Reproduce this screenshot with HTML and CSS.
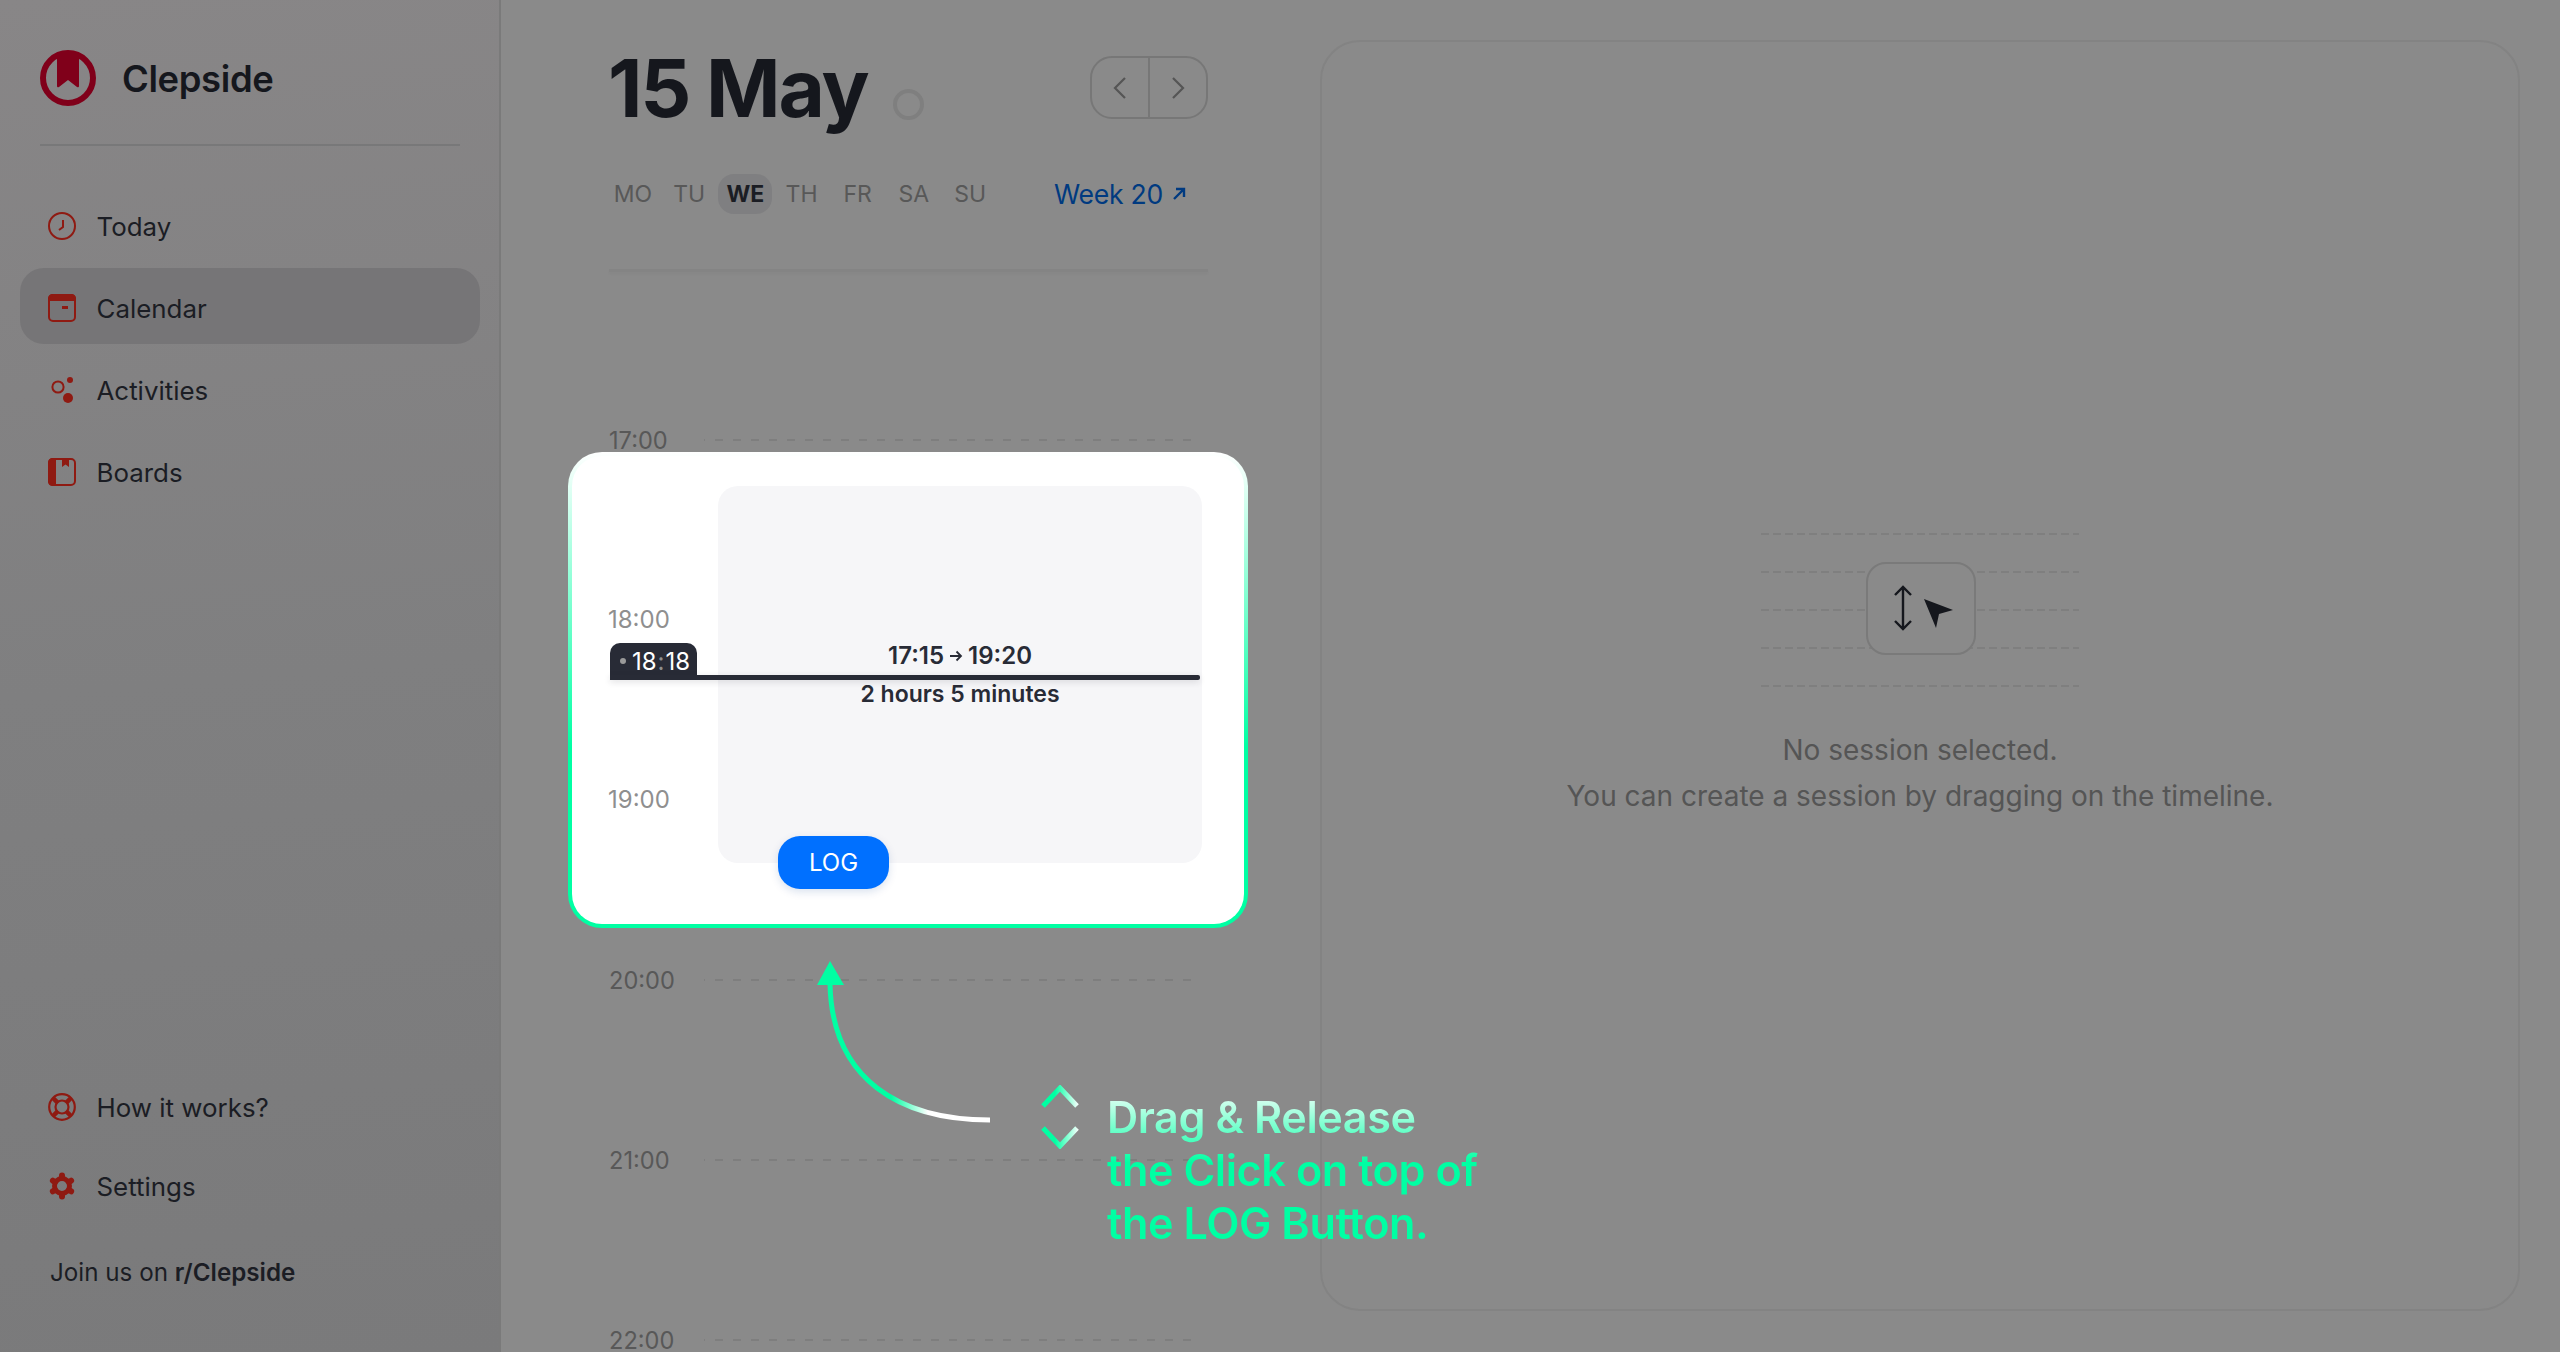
FILE: index.html
```html
<!DOCTYPE html>
<html lang="en">
<head>
    <meta charset="UTF-8">
    <meta name="viewport" content="width=device-width, initial-scale=1.0">
    <title>Clepside</title>
    <link rel="stylesheet" href="styles.css">
</head>
<body>
    <div class="app">
        <aside class="sidebar">
            <div class="brand">
                <svg class="logo" viewBox="0 0 56 56">
                    <circle cx="28" cy="28" r="25" fill="none" stroke="#80001a" stroke-width="6"/>
                    <path d="M17 3 H39 V36 Q39 38 37 37 L28 30 L19 37 Q17 38 17 36 Z" fill="#80001a"/>
                </svg>
                <span class="brand-name">Clepside</span>
            </div>

            <nav class="nav">
                <a class="nav-item">
                    <svg class="nav-icon" viewBox="0 0 28 28" fill="none" stroke="#8f1a12" stroke-width="2">
                        <circle cx="14" cy="14" r="13"/>
                        <path d="M15 8 V15 L11 18"/>
                    </svg>
                    Today
                </a>
                <a class="nav-item active">
                    <svg class="nav-icon" viewBox="0 0 28 28" fill="none" stroke="#8f1a12" stroke-width="2">
                        <rect x="1" y="1" width="26" height="26" rx="4"/>
                        <path d="M1 6 V5 Q1 1 5 1 H23 Q27 1 27 5 V6 Z" fill="#8f1a12"/>
                        <rect x="14" y="12" width="6" height="3" fill="#8f1a12" stroke="none"/>
                    </svg>
                    Calendar
                </a>
                <a class="nav-item">
                    <svg class="nav-icon" viewBox="0 0 28 28" fill="#8f1a12">
                        <circle cx="10" cy="11" r="5.6" fill="none" stroke="#8f1a12" stroke-width="2"/>
                        <circle cx="22" cy="4" r="3"/>
                        <circle cx="20" cy="22" r="5"/>
                    </svg>
                    Activities
                </a>
                <a class="nav-item">
                    <svg class="nav-icon" viewBox="0 0 28 28" fill="none" stroke="#8f1a12" stroke-width="2">
                        <rect x="1" y="1" width="26" height="26" rx="4"/>
                        <path d="M1 5 Q1 1 5 1 H7 V27 H5 Q1 27 1 23 Z" fill="#8f1a12"/>
                        <path d="M14 1 H21 V9 L17.5 6.5 L14 9 Z" fill="#8f1a12" stroke="none"/>
                    </svg>
                    Boards
                </a>
            </nav>

            <div class="sidebar-bottom">
                <a class="nav-item">
                    <svg class="nav-icon" viewBox="0 0 28 28" fill="none" stroke="#8f1a12" stroke-width="2.2">
                        <circle cx="14" cy="14" r="12.8"/>
                        <circle cx="14" cy="14" r="6.5"/>
                        <path d="M5 5 L9.4 9.4 M23 5 L18.6 9.4 M5 23 L9.4 18.6 M23 23 L18.6 18.6" stroke-width="4.5"/>
                    </svg>
                    How it works?
                </a>
                <a class="nav-item">
                    <svg class="nav-icon" viewBox="0 0 28 28" fill="none" stroke="#8f1a12">
                        <circle cx="14" cy="14" r="7.5" stroke-width="5"/>
                        <g stroke-width="6" stroke-linecap="round">
                            <path d="M14 3.5 V6"/>
                            <path d="M14 22 V24.5"/>
                            <path d="M4.9 8.7 L7 10"/>
                            <path d="M21 18 L23.1 19.3"/>
                            <path d="M4.9 19.3 L7 18"/>
                            <path d="M21 10 L23.1 8.7"/>
                        </g>
                    </svg>
                    Settings
                </a>
                <p class="join">Join us on <b>r/Clepside</b></p>
            </div>
        </aside>

        <main class="main">
            <section class="calendar">
                <div class="date-row">
                    <h1 class="date">15 May</h1>
                    <span class="status-ring"></span>
                    <div class="pager">
                        <button class="pager-btn">
                            <svg viewBox="0 0 14 24" width="14" height="24" fill="none" stroke="#555" stroke-width="2.2"><path d="M12 2 L2 12 L12 22"/></svg>
                        </button>
                        <button class="pager-btn">
                            <svg viewBox="0 0 14 24" width="14" height="24" fill="none" stroke="#555" stroke-width="2.2"><path d="M2 2 L12 12 L2 22"/></svg>
                        </button>
                    </div>
                </div>

                <div class="week-row">
                    <div class="days">
                        <span class="day">MO</span>
                        <span class="day">TU</span>
                        <span class="day today">WE</span>
                        <span class="day">TH</span>
                        <span class="day">FR</span>
                        <span class="day">SA</span>
                        <span class="day">SU</span>
                    </div>
                    <a class="week-link">Week 20
                        <svg viewBox="0 0 14 14" width="14" height="14" fill="none" stroke="#003a80" stroke-width="2.4"><path d="M2 12 L12 2 M4 2 H12 V10"/></svg>
                    </a>
                </div>
                <div class="header-rule"></div>

                <div class="timeline">
                    <div class="hour"><span class="hour-label">17:00</span><span class="hour-line"></span></div>
                    <div class="hour"><span class="hour-label">18:00</span><span class="hour-line"></span></div>
                    <div class="hour"><span class="hour-label">19:00</span><span class="hour-line"></span></div>
                    <div class="hour"><span class="hour-label">20:00</span><span class="hour-line"></span></div>
                    <div class="hour"><span class="hour-label">21:00</span><span class="hour-line"></span></div>
                    <div class="hour"><span class="hour-label">22:00</span><span class="hour-line"></span></div>
                </div>
            </section>

            <section class="detail">
                <div class="empty-art">
                    <span class="art-line"></span>
                    <span class="art-line"></span>
                    <span class="art-line"></span>
                    <span class="art-line"></span>
                    <span class="art-line"></span>
                    <div class="empty-icon">
                        <svg viewBox="0 0 70 50" width="70" height="50" fill="none">
                            <path d="M14 3 V45 M6 11 L14 3 L22 11 M6 37 L14 45 L22 37" stroke="#15171d" stroke-width="2.4"/>
                            <path d="M35 15 L64 26 L50 30 L47 44 Z" fill="#15171d"/>
                        </svg>
                    </div>
                </div>
                <p class="empty-text">No session selected.<br>You can create a session by dragging on the timeline.</p>
            </section>
        </main>

        <div class="spotlight">
            <span class="spot-hour spot-18">18:00</span>
            <span class="spot-hour spot-19">19:00</span>
            <div class="session">
                <span class="session-time">17:15 <svg viewBox="0 0 14 14" width="14" height="14" fill="none" stroke="#282b36" stroke-width="1.8"><path d="M1 7 H12 M7.5 2.5 L12 7 L7.5 11.5"/></svg> 19:20</span>
                <span class="session-length">2 hours 5 minutes</span>
            </div>
            <div class="now-tag"><i class="now-dot"></i>18<em>:</em>18</div>
            <div class="now-line"></div>
            <button class="log-btn">LOG</button>
        </div>

        <div class="callout">
            <svg class="callout-arrow" viewBox="0 0 176 164" width="176" height="164" fill="none">
                <defs>
                    <linearGradient id="arrowFade" gradientUnits="userSpaceOnUse" x1="75" y1="0" x2="112" y2="0">
                        <stop offset="0" stop-color="#00ffa3"/>
                        <stop offset="1" stop-color="#fff"/>
                    </linearGradient>
                </defs>
                <path d="M174 160 C84 160 16 120 14 24" stroke="url(#arrowFade)" stroke-width="5"/>
                <path d="M14 1 L28 25 H1 Z" fill="#00ffa3"/>
            </svg>
            <svg class="callout-chevrons" viewBox="0 0 38 64" width="38" height="64" fill="none">
                <defs>
                    <linearGradient id="chevFade" gradientUnits="userSpaceOnUse" x1="14" y1="0" x2="38" y2="0">
                        <stop offset="0" stop-color="#00ffa3"/>
                        <stop offset="1" stop-color="#fff"/>
                    </linearGradient>
                </defs>
                <path d="M2 21 L19 3 L36 21 M2 43 L19 61 L36 43" stroke="url(#chevFade)" stroke-width="5"/>
            </svg>
            <p class="callout-text">Drag &amp; Release<br>the Click on top of<br>the LOG Button.</p>
        </div>
    </div>
</body>
</html>
```

FILE: styles.css
```css
* {
    box-sizing: border-box;
}
body {
    margin: 0;
    font-family: Inter, "Noto Sans", sans-serif;
    background-color: #8a8a8a;
    color: #1b1d24;
    overflow: hidden;
}
.app {
    position: relative;
    display: flex;
    width: 2560px;
    height: 1352px;
    overflow: hidden;
}

/* sidebar */
.sidebar {
    display: flex;
    flex-direction: column;
    flex: 0 0 501px;
    padding: 50px 19px 0 20px;
    background: linear-gradient(175deg, #888687 0%, #7f7f80 50%, #7a7a7b 100%);
    border-right: 2px solid #7a7a7a;
}
.brand {
    display: flex;
    align-items: center;
    gap: 26px;
    height: 96px;
    margin: 0 20px;
    padding-bottom: 39px;
    border-bottom: 2px solid #787879;
}
.logo {
    width: 56px;
    height: 56px;
}
.brand-name {
    margin-top: 2px;
    font-size: 36.4px;
    font-weight: 600;
    color: #15171d;
    letter-spacing: -0.01em;
}
.nav {
    display: flex;
    flex-direction: column;
    gap: 6px;
    margin-top: 40px;
}
.nav-item {
    display: flex;
    align-items: center;
    gap: 20.5px;
    height: 76px;
    padding: 4px 0 0 28px;
    border-radius: 24px;
    font-size: 25.9px;
}
.nav-item.active {
    background-color: #767577;
}
.nav-icon {
    width: 28px;
    height: 28px;
    flex: none;
}
.sidebar-bottom {
    display: flex;
    flex-direction: column;
    gap: 3px;
    margin-top: auto;
    padding-bottom: 64px;
}
.join {
    margin: 33px 0 0 30px;
    font-size: 24.2px;
    line-height: 30px;
}
.join b {
    font-weight: 600;
}

/* calendar column */
.main {
    display: flex;
    flex: 1;
    gap: 112px;
    padding: 40px 40px 41px 108px;
}
.calendar {
    flex: 0 0 599px;
}
.date-row {
    display: flex;
    align-items: flex-start;
    height: 100px;
    padding-top: 16px;
}
.date {
    margin: -8px 0 0 -1px;
    font-size: 80px;
    font-weight: 700;
    line-height: 1;
    letter-spacing: -0.027em;
    color: #15171d;
}
.status-ring {
    width: 31px;
    height: 31px;
    margin: 33px 0 0 26px;
    border: 4px solid #7f7f7f;
    border-radius: 50%;
}
.pager {
    display: flex;
    margin-left: auto;
    width: 118px;
    height: 63px;
    border: 2px solid #777;
    border-radius: 22px;
}
.pager-btn {
    display: flex;
    flex: 1;
    align-items: center;
    justify-content: center;
    padding: 0;
    background: none;
    border: 0;
}
.pager-btn + .pager-btn {
    border-left: 2px solid #777;
}
.week-row {
    display: flex;
    align-items: center;
    justify-content: space-between;
    height: 40px;
    margin-top: 34px;
    padding-right: 22px;
}
.days {
    display: flex;
    gap: 2.2px;
    margin-left: -3px;
}
.day {
    width: 54px;
    height: 40px;
    font-size: 23px;
    line-height: 40px;
    text-align: center;
    color: #585858;
}
.day.today {
    background-color: #7f7f81;
    border-radius: 16px;
    font-weight: 700;
    color: #1b1d24;
}
.week-link {
    display: flex;
    align-items: center;
    gap: 9px;
    font-size: 26.6px;
    color: #003a80;
    letter-spacing: -0.01em;
}
.header-rule {
    height: 3px;
    margin-top: 55px;
    background-color: #848484;
    box-shadow: 0 2px 3px rgba(0, 0, 0, 0.03);
}
.timeline {
    margin-top: 78px;
}
.hour {
    display: flex;
    align-items: center;
    height: 180px;
}
.hour-label {
    flex: 0 0 95px;
    font-size: 23.6px;
    color: #585858;
}
.hour-line {
    flex: 1;
    height: 2px;
    margin-right: 17px;
    background: repeating-linear-gradient(90deg, #7e7e7e 0 1px, transparent 1px 11px, #7e7e7e 11px 18px);
}

/* empty session panel */
.detail {
    flex: 1;
    display: flex;
    flex-direction: column;
    align-items: center;
    border: 2px solid #838383;
    border-radius: 40px;
}
.empty-art {
    position: relative;
    display: flex;
    flex-direction: column;
    gap: 36px;
    width: 318px;
    margin-top: 491px;
}
.art-line {
    height: 2px;
    background: repeating-linear-gradient(90deg, #7f7f7f 0 8px, transparent 8px 12px);
}
.empty-icon {
    position: absolute;
    left: 105px;
    top: 29px;
    display: flex;
    align-items: center;
    justify-content: center;
    width: 110px;
    height: 93px;
    padding-left: 6px;
    background-color: #8a8a8a;
    border: 2px solid #7a7a7a;
    border-radius: 20px;
}
.empty-text {
    margin: 40px 0 0;
    font-size: 28px;
    line-height: 46px;
    text-align: center;
    color: #555;
}

/* highlighted part of the timeline */
.spotlight {
    position: absolute;
    left: 568px;
    top: 452px;
    width: 680px;
    height: 476px;
    border: 4px solid transparent;
    border-radius: 34px;
    background:
        linear-gradient(#fff, #fff) padding-box,
        linear-gradient(180deg, #fff 0%, #00ffa3 62%) border-box;
}
.spot-hour {
    position: absolute;
    left: 36px;
    font-size: 24px;
    line-height: 30px;
    color: #8f8f8f;
}
.spot-18 {
    top: 149px;
}
.spot-19 {
    top: 329px;
}
.session {
    position: absolute;
    left: 146px;
    top: 30px;
    display: flex;
    flex-direction: column;
    align-items: center;
    width: 484px;
    height: 377px;
    padding-top: 151px;
    background-color: #f6f6f8;
    border-radius: 20px;
    font-size: 24px;
    font-weight: 600;
    line-height: 38px;
    color: #282b36;
}
.session-time {
    display: flex;
    align-items: center;
    gap: 5px;
}
.session-length {
    font-size: 23px;
}
.now-tag {
    position: absolute;
    left: 38px;
    top: 187px;
    display: flex;
    align-items: center;
    width: 87px;
    height: 36px;
    padding-left: 10px;
    background-color: #282b36;
    border-radius: 10px 10px 0 0;
    font-size: 24px;
    color: #fff;
}
.now-tag em {
    margin: 0 1px;
    font-style: normal;
    color: #8f8f8f;
}
.now-dot {
    width: 6px;
    height: 6px;
    margin-right: 6px;
    background-color: #9a9a9a;
    border-radius: 50%;
}
.now-line {
    position: absolute;
    left: 38px;
    top: 219px;
    width: 590px;
    height: 5px;
    background-color: #282b36;
    border-radius: 0 2px 2px 0;
    box-shadow: 0 2px 6px rgba(40, 43, 54, 0.15);
}
.log-btn {
    position: absolute;
    left: 206px;
    top: 380px;
    width: 111px;
    height: 53px;
    padding: 0;
    background-color: #0070ff;
    border: 0;
    border-radius: 22px;
    box-shadow: 0 3px 8px rgba(0, 60, 140, 0.15);
    font-family: inherit;
    font-size: 24px;
    font-weight: 400;
    color: #fff;
}

/* drag hint */
.callout {
    position: absolute;
    left: 816px;
    top: 960px;
    display: flex;
    align-items: flex-start;
}
.callout-chevrons {
    margin: 125px 0 0 49px;
}
.callout-text {
    margin: 131px 0 0 28px;
    font-size: 43.2px;
    font-weight: 600;
    line-height: 53px;
    letter-spacing: -0.01em;
    white-space: nowrap;
    background: linear-gradient(180deg, #f0fff9 0%, #00ffa3 45%);
    -webkit-background-clip: text;
    background-clip: text;
    color: transparent;
}
```
